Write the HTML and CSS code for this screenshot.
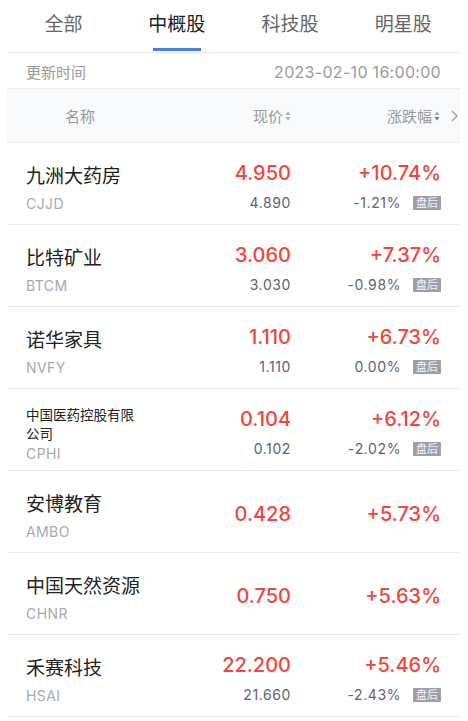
FILE: index.html
```html
<!DOCTYPE html>
<html lang="zh-CN">
  <head>
    <meta charset="UTF-8" />
    <meta name="viewport" content="width=device-width, initial-scale=1.0" />
    <title>中概股</title>
    <link rel="stylesheet" href="styles.css">
  </head>
  <body>
    <div class="page">
      <div class="tabs">
        <div class="tab">全部</div>
        <div class="tab active">中概股</div>
        <div class="tab">科技股</div>
        <div class="tab">明星股</div>
      </div>

      <div class="update">
        <span>更新时间</span>
        <span class="update-time">2023-02-10 16:00:00</span>
      </div>

      <div class="thead">
        <div class="th-name">名称</div>
        <div class="th-num">
          现价
          <svg class="sort" width="6" height="10" viewBox="0 0 6 10">
            <path d="M3 0.5 L5.6 4 L0.4 4 Z" fill="#a9a9b0" />
            <path d="M3 9.5 L5.6 6 L0.4 6 Z" fill="#a9a9b0" />
          </svg>
        </div>
        <div class="th-num">
          涨跌幅
          <svg class="sort" width="6" height="10" viewBox="0 0 6 10">
            <path d="M3 0.5 L5.6 4 L0.4 4 Z" fill="#a9a9b0" />
            <path d="M3 9.5 L5.6 6 L0.4 6 Z" fill="#4a7fe0" />
          </svg>
          <svg class="more" width="7" height="12" viewBox="0 0 7 12">
            <polyline points="1,1 6,6 1,11" fill="none" stroke="#9a9aa0" stroke-width="1.2" />
          </svg>
        </div>
      </div>

      <div class="row">
        <div class="cell-name">
          <div class="name">九洲大药房</div>
          <div class="code">CJJD</div>
        </div>
        <div class="cell-num">
          <div class="price">4.950</div>
          <div class="sub">4.890</div>
        </div>
        <div class="cell-num">
          <div class="price">+10.74%</div>
          <div class="sub">-1.21%<span class="badge">盘后</span></div>
        </div>
      </div>

      <div class="row">
        <div class="cell-name">
          <div class="name">比特矿业</div>
          <div class="code">BTCM</div>
        </div>
        <div class="cell-num">
          <div class="price">3.060</div>
          <div class="sub">3.030</div>
        </div>
        <div class="cell-num">
          <div class="price">+7.37%</div>
          <div class="sub">-0.98%<span class="badge">盘后</span></div>
        </div>
      </div>

      <div class="row">
        <div class="cell-name">
          <div class="name">诺华家具</div>
          <div class="code">NVFY</div>
        </div>
        <div class="cell-num">
          <div class="price">1.110</div>
          <div class="sub">1.110</div>
        </div>
        <div class="cell-num">
          <div class="price">+6.73%</div>
          <div class="sub">0.00%<span class="badge">盘后</span></div>
        </div>
      </div>

      <div class="row">
        <div class="cell-name long">
          <div class="name">中国医药控股有限公司</div>
          <div class="code">CPHI</div>
        </div>
        <div class="cell-num">
          <div class="price">0.104</div>
          <div class="sub">0.102</div>
        </div>
        <div class="cell-num">
          <div class="price">+6.12%</div>
          <div class="sub">-2.02%<span class="badge">盘后</span></div>
        </div>
      </div>

      <div class="row">
        <div class="cell-name">
          <div class="name">安博教育</div>
          <div class="code">AMBO</div>
        </div>
        <div class="cell-num">
          <div class="price">0.428</div>
        </div>
        <div class="cell-num">
          <div class="price">+5.73%</div>
        </div>
      </div>

      <div class="row">
        <div class="cell-name">
          <div class="name">中国天然资源</div>
          <div class="code">CHNR</div>
        </div>
        <div class="cell-num">
          <div class="price">0.750</div>
        </div>
        <div class="cell-num">
          <div class="price">+5.63%</div>
        </div>
      </div>

      <div class="row">
        <div class="cell-name">
          <div class="name">禾赛科技</div>
          <div class="code">HSAI</div>
        </div>
        <div class="cell-num">
          <div class="price">22.200</div>
          <div class="sub">21.660</div>
        </div>
        <div class="cell-num">
          <div class="price">+5.46%</div>
          <div class="sub">-2.43%<span class="badge">盘后</span></div>
        </div>
      </div>
    </div>
  </body>
</html>
```

FILE: styles.css
```css
* {
  box-sizing: border-box;
}
body {
  margin: 0;
  background: #fff;
  font-family: Inter, "Noto Sans CJK SC", sans-serif;
  color: #222;
}
.page {
  margin: 0 8px 0 7px;
}
.tabs {
  display: flex;
  height: 53px;
  border-bottom: 1px solid #ececec;
}
.tab {
  flex: 1;
  display: flex;
  flex-direction: column;
  align-items: center;
  padding-top: 11px;
  font-size: 19px;
  line-height: 28px;
  color: #666;
}
.tab.active {
  color: #222;
}
.tab.active::after {
  content: "";
  width: 48px;
  height: 3px;
  margin-top: 9px;
  background: #4a7fe0;
}
.update {
  display: flex;
  justify-content: space-between;
  align-items: center;
  height: 36px;
  padding: 2px 19px 0;
  border-bottom: 1px solid #ececec;
  font-size: 15px;
  color: #9a9a9a;
}
.update-time {
  font-size: 16px;
  letter-spacing: 0.3px;
}
.thead,
.row {
  display: grid;
  grid-template-columns: 1fr 100px 150px;
  align-items: center;
  padding: 0 19px;
  border-bottom: 1px solid #ececec;
}
.thead {
  height: 54px;
  background: #f8f9fb;
  font-size: 15px;
  color: #999;
}
.th-name {
  padding-left: 39px;
}
.th-num {
  display: flex;
  justify-content: flex-end;
  align-items: center;
}
.sort {
  margin-left: 2px;
}
.more {
  margin-left: 11px;
  margin-right: -17px;
}
.row {
  height: 82px;
}
.cell-name {
  display: flex;
  flex-direction: column;
  padding-top: 10px;
}
.name {
  font-size: 19px;
  line-height: 26px;
  color: #222;
}
.code {
  margin-top: 4px;
  font-size: 14px;
  line-height: 20px;
  color: #a9a9ae;
  letter-spacing: 0.4px;
}
.cell-name.long .name {
  max-width: 110px;
  font-size: 13.5px;
  line-height: 19px;
}
.cell-name.long .code {
  margin-top: 0;
}
.cell-num {
  display: flex;
  flex-direction: column;
  align-items: flex-end;
  padding-top: 5px;
}
.price {
  font-size: 20px;
  line-height: 26px;
  font-weight: 500;
  color: #f0463b;
}
.sub {
  display: flex;
  align-items: center;
  margin-top: 7px;
  font-size: 14px;
  line-height: 20px;
  letter-spacing: 0.6px;
  color: #5b6377;
}
.badge {
  margin-left: 12px;
  padding: 0 3px;
  font-size: 11px;
  line-height: 14px;
  letter-spacing: 0;
  background: #9d9dab;
  color: #f4f4f8;
  border-radius: 1px;
}
```
